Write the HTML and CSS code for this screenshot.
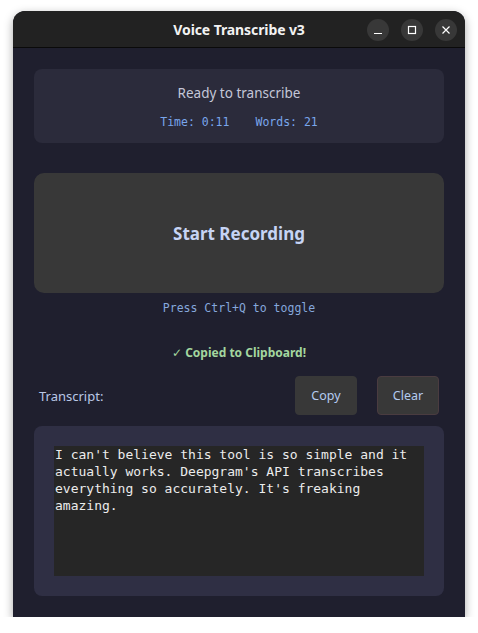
FILE: index.html
```html
<!DOCTYPE html>
<html>
<head>
<meta charset="utf-8">
<link rel="stylesheet" href="styles.css">
</head>
<body>
<div class="window">
  <div class="titlebar">
    <div class="title">Voice Transcribe v3</div>
    <div class="controls">
      <span class="ctl"><svg width="10" height="10" viewBox="0 0 10 10"><path d="M1 8.5h8" stroke="#fff" stroke-width="1.2"/></svg></span>
      <span class="ctl"><svg width="10" height="10" viewBox="0 0 10 10"><rect x="1.5" y="1.5" width="7" height="7" fill="none" stroke="#fff" stroke-width="1.2"/></svg></span>
      <span class="ctl"><svg width="10" height="10" viewBox="0 0 10 10"><path d="M1.5 1.5l7 7M8.5 1.5l-7 7" stroke="#fff" stroke-width="1.2"/></svg></span>
    </div>
  </div>
  <div class="content">
    <div class="status-card">
      <div class="status">Ready to transcribe</div>
      <div class="stats"><span>Time: 0:11</span><span>Words: 21</span></div>
    </div>
    <button class="record">Start Recording</button>
    <div class="hint">Press Ctrl+Q to toggle</div>
    <div class="copied"><span class="check">✓</span> Copied to Clipboard!</div>
    <div class="row">
      <span class="label">Transcript:</span>
      <div class="actions">
        <button class="btn">Copy</button>
        <button class="btn clear">Clear</button>
      </div>
    </div>
    <div class="transcript-card">
      <div class="transcript">I can't believe this tool is so simple and it actually works. Deepgram's API transcribes everything so accurately. It's freaking amazing.</div>
    </div>
  </div>
</div>
</body>
</html>
```

FILE: styles.css
```css
* { box-sizing: border-box; }
html, body { margin: 0; padding: 0; background: #ffffff; }
body {
  padding: 11px 0 0 13px;
  font-family: "Noto Sans", "DejaVu Sans", sans-serif;
}
.window {
  width: 452px;
  height: 606px;
  border-radius: 12px 12px 0 0;
  overflow: hidden;
  background: #1f1f2e;
  box-shadow: 0 3px 10px rgba(0,0,0,0.35);
  display: flex;
  flex-direction: column;
}
.titlebar {
  height: 37px;
  background: #222222;
  border-bottom: 1px solid #0a0a0a;
  position: relative;
  display: flex;
  align-items: center;
  justify-content: center;
  flex-shrink: 0;
}
.title {
  color: #f2f2f2;
  font-weight: 700;
  font-size: 14px;
  letter-spacing: -0.1px;
}
.controls {
  position: absolute;
  right: 8px;
  top: 8px;
  display: flex;
  gap: 12px;
}
.ctl {
  width: 22px;
  height: 22px;
  border-radius: 50%;
  background: #383838;
  display: flex;
  align-items: center;
  justify-content: center;
}
.content {
  flex: 1;
  padding: 21px 21px 20px;
  display: flex;
  flex-direction: column;
}
.status-card {
  height: 74px;
  background: #2b2b3b;
  border-radius: 8px;
  display: flex;
  flex-direction: column;
  align-items: center;
  padding-top: 14px;
}
.status {
  color: #c4c7d8;
  font-size: 13.5px;
  line-height: 20px;
}
.stats {
  margin-top: 12px;
  display: flex;
  gap: 26px;
  font-family: "DejaVu Sans Mono", monospace;
  font-size: 11.5px;
  line-height: 14px;
  color: #79a6ec;
}
.record {
  margin-top: 30px;
  height: 120px;
  border: none;
  border-radius: 10px;
  background: #383838;
  color: #c6d4f4;
  font-family: "Noto Sans", "DejaVu Sans", sans-serif;
  font-weight: 700;
  font-size: 17px;
  padding: 0;
}
.hint {
  margin-top: 8px;
  text-align: center;
  font-family: "DejaVu Sans Mono", monospace;
  font-size: 11.5px;
  line-height: 14px;
  color: #86a8dc;
}
.copied {
  margin-top: 30px;
  text-align: center;
  color: #a3d69f;
  font-weight: 700;
  font-size: 12px;
  line-height: 16px;
}
.check { font-weight: 400; }
.row {
  margin-top: 15px;
  display: flex;
  align-items: center;
  justify-content: space-between;
  padding-left: 5px;
  padding-right: 5px;
}
.label {
  color: #b9c8e6;
  font-size: 13px;
}
.actions {
  display: flex;
  gap: 20px;
}
.btn {
  width: 62px;
  height: 39px;
  border: 1px solid #383838;
  border-radius: 4px;
  background: #383838;
  color: #b4cbef;
  font-family: "Noto Sans", "DejaVu Sans", sans-serif;
  font-size: 12.5px;
  padding: 0;
}
.clear { border-color: #4a3c40; }
.transcript-card {
  margin-top: 11px;
  height: 170px;
  background: #2f2f44;
  border-radius: 8px;
  padding: 20px;
}
.transcript {
  height: 130px;
  background: #262626;
  color: #ececec;
  font-family: "DejaVu Sans Mono", monospace;
  font-size: 13px;
  line-height: 17px;
  padding: 0 2px 0 1px;
}
```
